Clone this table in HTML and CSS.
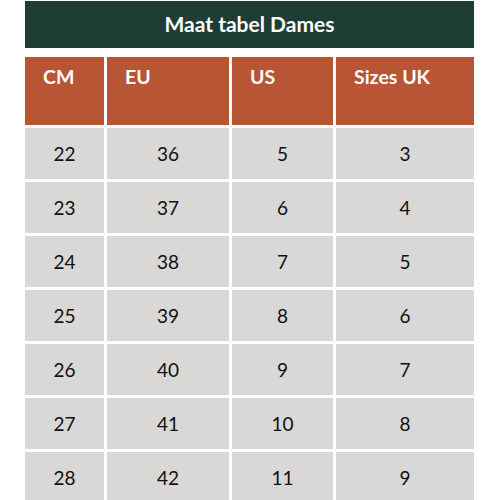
FILE: index.html
```html
<!DOCTYPE html>
<html>
<head>
<meta charset="utf-8">
<link rel="stylesheet" href="styles.css">
</head>
<body>
<div class="sheet">
  <div class="title">Maat tabel Dames</div>
  <div class="grid">
    <div class="head">CM</div>
    <div class="head">EU</div>
    <div class="head">US</div>
    <div class="head"><span class="spell">Sizes</span> UK</div>
    <div class="cell">22</div><div class="cell">36</div><div class="cell">5</div><div class="cell">3</div>
    <div class="cell">23</div><div class="cell">37</div><div class="cell">6</div><div class="cell">4</div>
    <div class="cell">24</div><div class="cell">38</div><div class="cell">7</div><div class="cell">5</div>
    <div class="cell">25</div><div class="cell">39</div><div class="cell">8</div><div class="cell">6</div>
    <div class="cell">26</div><div class="cell">40</div><div class="cell">9</div><div class="cell">7</div>
    <div class="cell">27</div><div class="cell">41</div><div class="cell">10</div><div class="cell">8</div>
    <div class="cell">28</div><div class="cell">42</div><div class="cell">11</div><div class="cell">9</div>
  </div>
</div>
</body>
</html>
```
FILE: styles.css
```css
html, body {
  margin: 0;
  padding: 0;
  background: #ffffff;
}
body {
  font-family: "Lato", "Liberation Sans", sans-serif;
}
.sheet {
  width: 449px;
  margin: 1px 0 0 25px;
  display: flex;
  flex-direction: column;
  gap: 9px;
}
.title {
  height: 47px;
  background: #1d3d35;
  color: #ffffff;
  font-weight: 700;
  font-size: 21px;
  display: flex;
  align-items: center;
  justify-content: center;
  padding-bottom: 2px;
  box-sizing: border-box;
}
.grid {
  display: grid;
  grid-template-columns: 79px 122px 101px 138px;
  grid-template-rows: 68px repeat(7, 51px);
  gap: 3px;
}
.head {
  background: #b75535;
  color: #ffffff;
  font-weight: 700;
  font-size: 19.5px;
  padding: 8px 0 0 18px;
}
.spell {
  text-decoration-line: underline;
  text-decoration-style: wavy;
  text-decoration-color: #e04848;
  text-decoration-thickness: 1px;
  text-underline-offset: 2px;
}
.cell {
  background: #d9d8d6;
  color: #111111;
  font-size: 19px;
  display: flex;
  align-items: center;
  justify-content: center;
}
```
